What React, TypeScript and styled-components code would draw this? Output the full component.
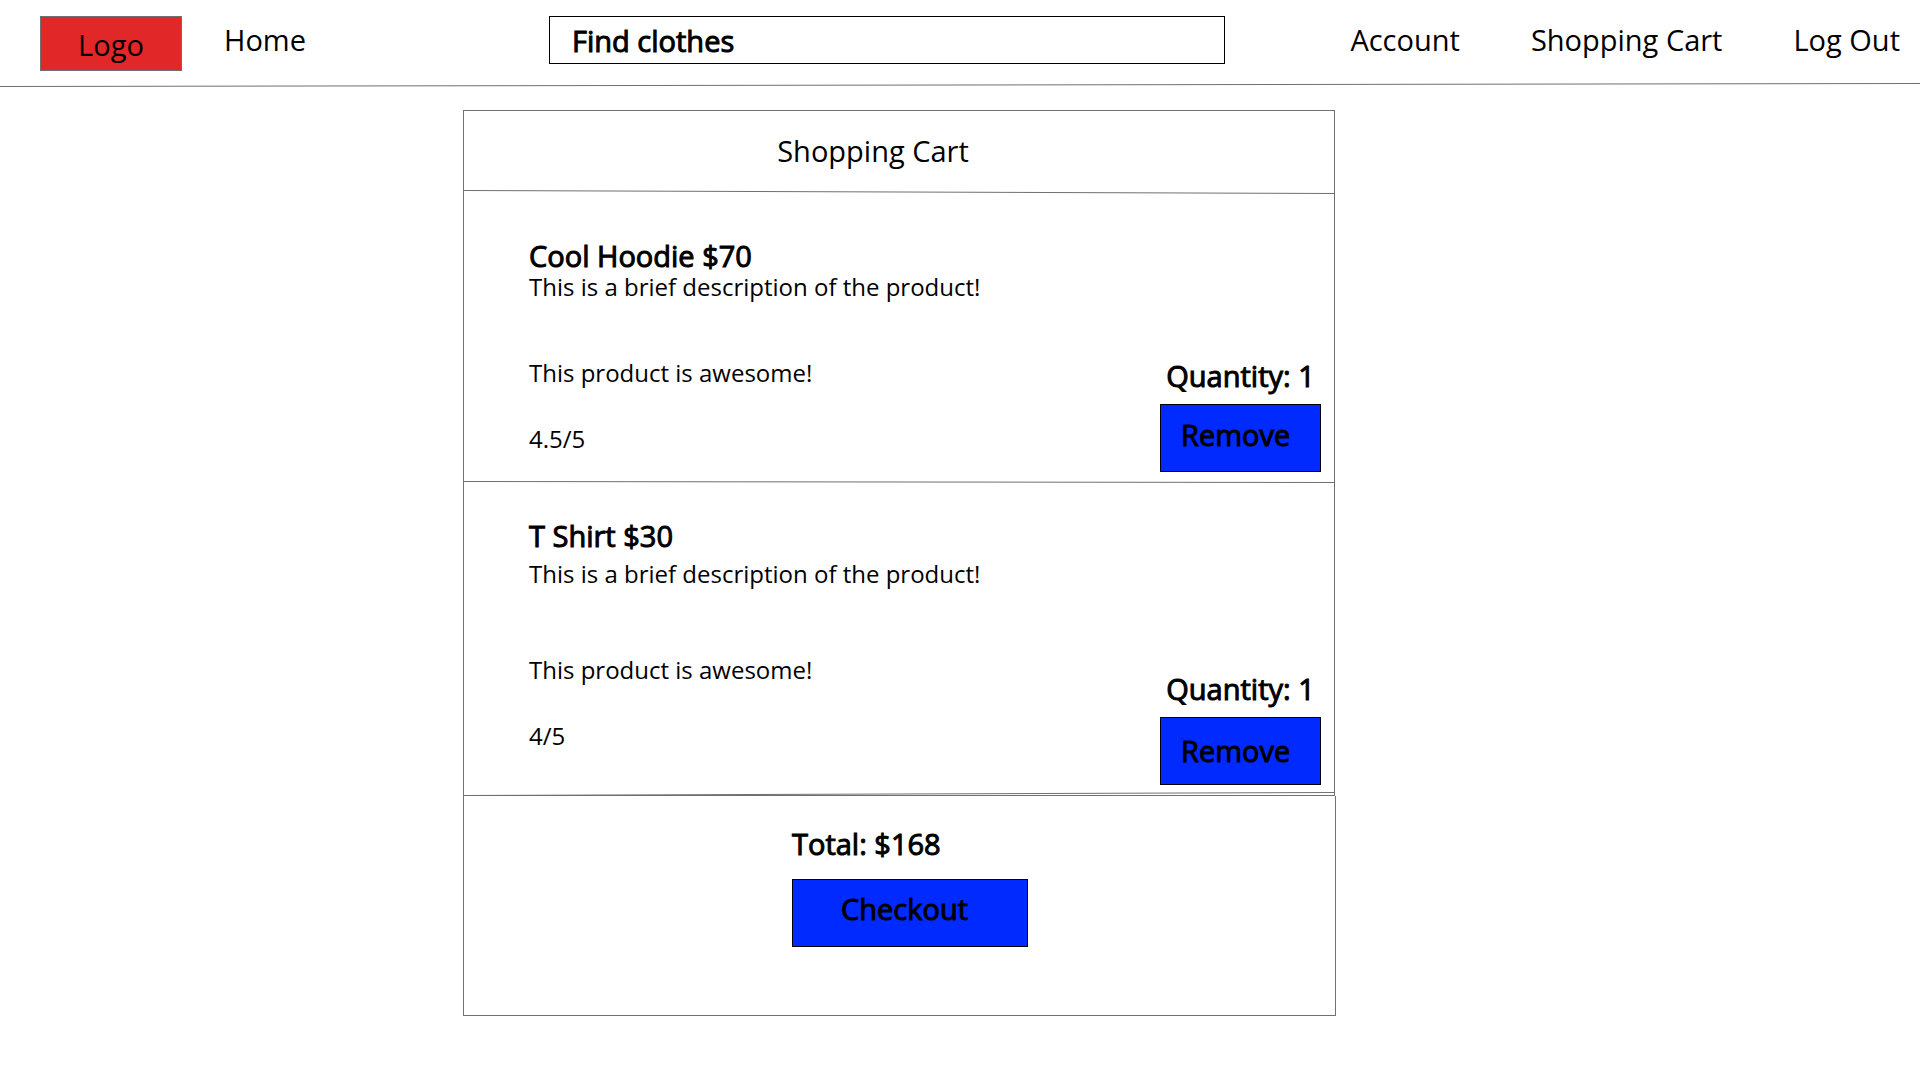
import React from "react";
import styled, { createGlobalStyle, css } from "styled-components";

const INK = "#000000";
const LINE = "#707070";
const BLUE = "#002aff";
const RED = "#e12727";

const GlobalStyle = createGlobalStyle`
  *, *::before, *::after { box-sizing: border-box; }
  body {
    margin: 0;
    background: #ffffff;
    color: ${INK};
    font-family: "Open Sans", "Noto Sans", sans-serif;
    font-size: 24px;
    line-height: 30px;
  }
`;

const heavy = css`
  font-size: 29px;
  line-height: 32px;
  font-weight: 400;
  -webkit-text-stroke: 1px ${INK};
`;

const HeaderRow = styled.div`
  display: grid;
  grid-template-columns: 509fr 676fr 675fr;
  align-items: start;
  padding: 16px 20px 12px 40px;
`;

const HeaderGroup = styled.div<{ $end?: boolean }>`
  display: flex;
  align-items: flex-start;
  justify-content: ${(p) => (p.$end ? "flex-end" : "flex-start")};
  gap: ${(p) => (p.$end ? 71 : 42)}px;
`;

const Logo = styled.a`
  display: flex;
  align-items: center;
  justify-content: center;
  width: 142px;
  height: 55px;
  padding-top: 2px;
  border: 1px solid ${LINE};
  background: ${RED};
  color: ${INK};
  font-size: 29px;
  text-decoration: none;
`;

const NavLink = styled.a`
  color: ${INK};
  font-size: 29px;
  line-height: 48px;
  text-decoration: none;
  white-space: nowrap;
`;

const SearchBox = styled.input`
  ${heavy}
  width: 100%;
  height: 48px;
  padding: 0 22px;
  border: 1px solid ${INK};
  border-radius: 0;
  background: #ffffff;
  color: ${INK};
  font-family: inherit;

  &::placeholder {
    color: ${INK};
    opacity: 1;
  }
`;

const RuleSvg = styled.svg`
  display: block;
  width: 100%;
  overflow: visible;
`;

const Main = styled.main`
  display: grid;
  grid-template-columns: 463fr 873fr 584fr;
  padding: 23px 0 64px;
`;

const Cart = styled.div`
  grid-column: 2;
`;

const Products = styled.section`
  margin-right: 1px;
  border: 1px solid ${LINE};
`;

const Title = styled.h1`
  margin: 0;
  padding: 20px 52px 19px 0;
  font-size: 29px;
  font-weight: 400;
  line-height: 40px;
  text-align: center;
`;

const Item = styled.article<{ $top: number; $bottom: number }>`
  display: grid;
  grid-template-columns: 1fr 161px;
  padding: ${(p) => p.$top}px 13px ${(p) => p.$bottom}px 65px;
`;

const Details = styled.div<{ $bottom: number }>`
  padding-bottom: ${(p) => p.$bottom}px;
`;

const Name = styled.h2`
  ${heavy}
  margin: 0;
`;

const Text = styled.p<{ $gap: number }>`
  margin: ${(p) => p.$gap}px 0 0;
`;

const Actions = styled.div`
  display: flex;
  flex-direction: column;
  align-self: end;
  gap: 12px;
`;

const Quantity = styled.div`
  ${heavy}
  text-align: center;
  white-space: nowrap;
`;

const Button = styled.button<{ $left: number; $lift: number }>`
  ${heavy}
  display: flex;
  align-items: center;
  width: 100%;
  height: 68px;
  padding: 0 0 ${(p) => p.$lift}px ${(p) => p.$left}px;
  border: 1px solid ${INK};
  border-radius: 0;
  background: ${BLUE};
  color: ${INK};
  font-family: inherit;
  cursor: pointer;
`;

const Summary = styled.section`
  display: flex;
  justify-content: center;
  padding: 32px 0 68px 21px;
  border: 1px solid ${LINE};
  border-top: 0;
`;

const SummaryBody = styled.div`
  display: flex;
  flex-direction: column;
  gap: 19px;
  width: 236px;
`;

const Total = styled.div`
  ${heavy}
`;

/* A hairline that drifts a few pixels between its two ends. */
function Rule({ height, from, to }: { height: number; from: number; to: number }) {
  return (
    <RuleSvg height={height} aria-hidden="true">
      <line x1="0" y1={from} x2="100%" y2={to} stroke={LINE} strokeWidth="1" />
    </RuleSvg>
  );
}

type Product = {
  name: string;
  price: number;
  rating: string;
  space: { top: number; text: number; review: number; details: number; bottom: number; lift: number };
  rule: { height: number; from: number; to: number };
};

const products: Product[] = [
  {
    name: "Cool Hoodie",
    price: 70,
    rating: "4.5/5",
    space: { top: 46, text: 0, review: 56, details: 18, bottom: 9, lift: 6 },
    rule: { height: 2, from: 0.5, to: 1.5 },
  },
  {
    name: "T Shirt",
    price: 30,
    rating: "4/5",
    space: { top: 37, text: 7, review: 66, details: 34, bottom: 7, lift: 0 },
    rule: { height: 3, from: 3.5, to: 0.5 },
  },
];

export default function App() {
  return (
    <>
      <GlobalStyle />
      <header>
        <HeaderRow>
          <HeaderGroup as="nav" aria-label="Main">
            <Logo href="#">Logo</Logo>
            <NavLink href="#home">Home</NavLink>
          </HeaderGroup>
          <SearchBox type="search" aria-label="Find clothes" placeholder="Find clothes" />
          <HeaderGroup as="nav" aria-label="User" $end>
            <NavLink href="#account">Account</NavLink>
            <NavLink href="#cart">Shopping Cart</NavLink>
            <NavLink href="#logout">Log Out</NavLink>
          </HeaderGroup>
        </HeaderRow>
        <Rule height={4} from={3.5} to={0.5} />
      </header>
      <Main>
        <Cart>
          <Products>
            <Title>Shopping Cart</Title>
            <Rule height={4} from={0.5} to={3.5} />
            {products.map(({ name, price, rating, space, rule }) => (
              <React.Fragment key={name}>
                <Item $top={space.top} $bottom={space.bottom}>
                  <Details $bottom={space.details}>
                    <Name>
                      {name} ${price}
                    </Name>
                    <Text $gap={space.text}>This is a brief description of the product!</Text>
                    <Text $gap={space.review}>This product is awesome!</Text>
                    <Text $gap={36}>{rating}</Text>
                  </Details>
                  <Actions>
                    <Quantity>Quantity: 1</Quantity>
                    <Button type="button" $left={20} $lift={space.lift}>
                      Remove
                    </Button>
                  </Actions>
                </Item>
                <Rule {...rule} />
              </React.Fragment>
            ))}
          </Products>
          <Summary>
            <SummaryBody>
              <Total>Total: $168</Total>
              <Button type="button" $left={48} $lift={8}>
                Checkout
              </Button>
            </SummaryBody>
          </Summary>
        </Cart>
      </Main>
    </>
  );
}
